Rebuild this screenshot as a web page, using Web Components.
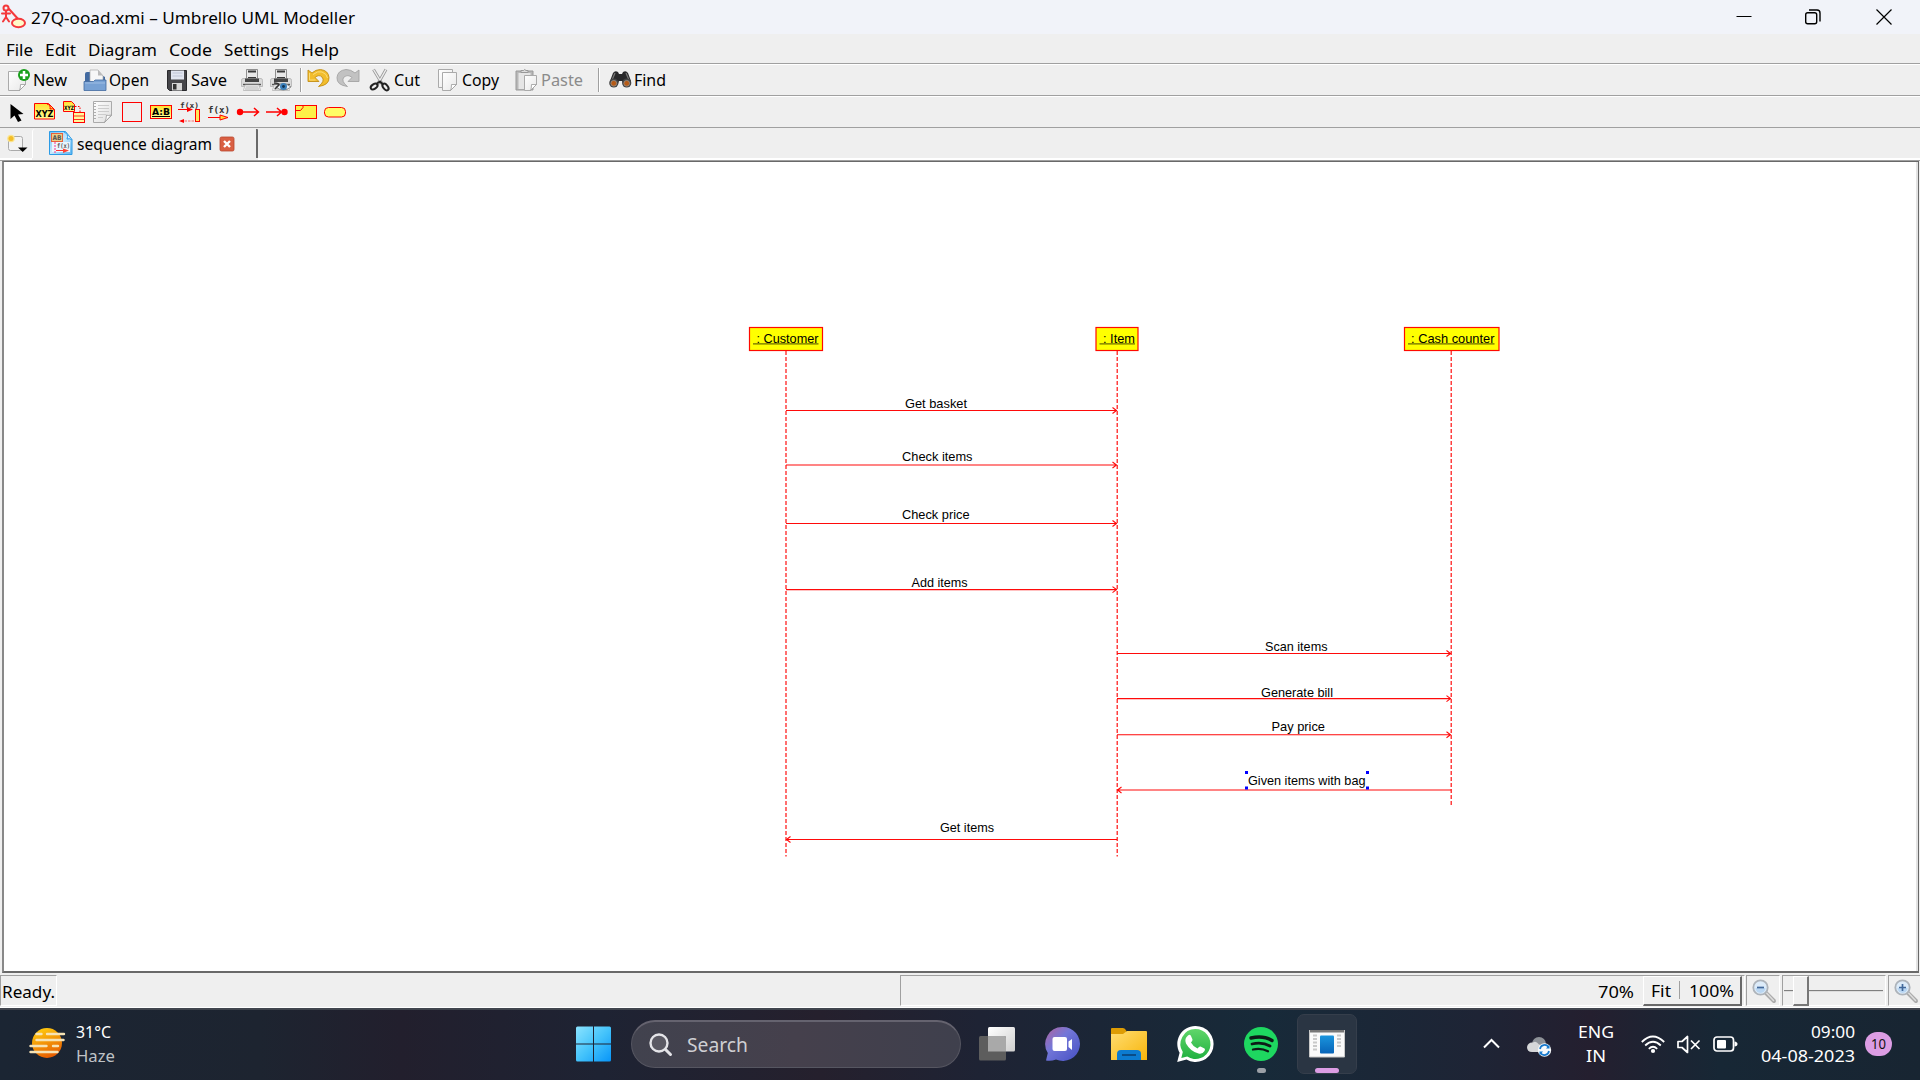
<!DOCTYPE html>
<html lang="en">
<head>
<meta charset="utf-8">
<title>27Q-ooad.xmi – Umbrello UML Modeller</title>
<style>
html,body{margin:0;padding:0;width:1920px;height:1080px;overflow:hidden;background:#efefef}
body{font-family:"Noto Sans","Open Sans",sans-serif;font-size:17px;color:#000}
</style>
</head>
<body>
<uml-desktop></uml-desktop>
<script>
function define(name, css, html, hook) {
  const tpl = document.createElement('template');
  tpl.innerHTML = '<style>:host{display:block;box-sizing:border-box}*{box-sizing:border-box}' + css + '</style>' + html;
  customElements.define(name, class extends HTMLElement {
    constructor() {
      super();
      this.attachShadow({ mode: 'open' }).appendChild(tpl.content.cloneNode(true));
    }
    connectedCallback() { if (hook) hook.call(this, this.shadowRoot); }
  });
}

/* Text condensed or expanded to a given advance width */
define('fit-text', ':host{display:inline-block;white-space:nowrap;flex:none;line-height:24px;height:24px}span{display:inline-block;transform-origin:0 50%}', '<span><slot></slot></span>', function (r) {
  const w = parseFloat(this.getAttribute('w'));
  this.style.width = w + 'px';
  const s = r.querySelector('span');
  const n = s.offsetWidth ? s.getBoundingClientRect().width : 0;
  if (n) s.style.transform = 'scaleX(' + (w / n) + ')';
});

const page = (x, y, w, h) => `<path d="M${x} ${y}h${w}v${h - 6}l-6 6h-${w - 6}z" fill="url(#pg)" stroke="#aaa"/><path d="M${x + w} ${y + h - 6}h-5q0 4-1 6z" fill="#fff" stroke="#999" stroke-width=".8"/>`;
const pg = '<linearGradient id="pg" x1="0" y1="0" x2="1" y2="1"><stop offset="0" stop-color="#fff"/><stop offset="1" stop-color="#e8e8e8"/></linearGradient>';
const yel = '<linearGradient id="yl" x1="0" y1="0" x2="0" y2="1"><stop offset="0" stop-color="#ffe030"/><stop offset="1" stop-color="#fffc96"/></linearGradient>';
const printer = '<path d="M6.500 1.500h11v9h-11z" fill="#e8e8e8" stroke="#777" stroke-width=".8"/><path d="M8 2.500h8v2H8zM8 9h8v2H8z" fill="#3a3a3a"/><path d="M3 10.500h18q1.500 0 1.500 2v6H1.500v-6q0-2 1.500-2z" fill="#dadada" stroke="#aaa" stroke-width=".7"/><path d="M5 10.500h14v3.500H5z" fill="#444"/><path d="M3 16.500h18" stroke="#555" stroke-width="1.400"/><path d="M5 17h14l1.500 5.500h-17z" fill="#fafafa" stroke="#aaa" stroke-width=".7"/><path d="M5.500 19h13M5 21h14" stroke="#999" stroke-width=".8"/>';
const glass = sign => `<path d="M15 14l8 8" stroke="#aaa" stroke-width="4" stroke-linecap="round"/><path d="M15.500 14l7 7.500" stroke="#ddd" stroke-width="1.500" stroke-linecap="round"/><circle cx="9.500" cy="8.500" r="7.200" fill="#dcebf9" stroke="#adb3ba" stroke-width="1.800"/><path d="M4.500 9a5 5 0 0 0 10 0z" fill="#b9d6f2"/><path d="${sign}" stroke="#42699b" stroke-width="1.700"/>`;
const icons = {
  umbrello: '<g fill="none" stroke="#f4393c" stroke-width="2" stroke-linecap="round"><circle cx="5" cy="4" r="2.500"/><path d="M5 7v6M1 9.500h8M5 13l-3 4.500M5 13l3 4.500M8 5l10 11"/><ellipse cx="17.500" cy="19" rx="6.500" ry="4.300" fill="#fffac8"/></g>',
  minimize: '<path d="M4.500 11.500h15" stroke="#000" stroke-width="1"/>',
  restore: '<g fill="none" stroke="#000" stroke-width="1.400"><rect x="4.700" y="7.700" width="11" height="11" rx="2"/><path d="M8 5h8q3 0 3 3v8.500"/></g>',
  close: '<path d="M4.500 4.500l15 15M19.500 4.500l-15 15" stroke="#000" stroke-width="1.200"/>',
  new: `${pg}${page(1.5, 3.5, 17, 19)}<circle cx="17" cy="7" r="6" fill="#1aa01c"/><path d="M17 3v8M13 7h8" stroke="#fff" stroke-width="2.500"/>`,
  open: '<path d="M2 22V6q0-2 2-2h9l9 5v13z" fill="#426aa0"/><path d="M7 14V2h8l5 6v7z" fill="#f7f7f7" stroke="#aaa" stroke-width=".7"/><path d="M15 2v5.500h5z" fill="#bbb"/><path d="M1 13.500h9.500l1.500-1.500h11v10.500H1z" fill="#77a1d4" stroke="#426aa0" stroke-width=".8"/><path d="M2 15h20" stroke="#a9c6e8" stroke-width=".8"/>',
  save: '<path d="M2.500 2.500h19v20H4.500l-2-2z" fill="#454549" stroke="#29292c"/><path d="M6 2.500h13v9H6z" fill="#e2e6f1"/><path d="M7.500 5h10M7.500 8h10" stroke="#bfc5d6"/><path d="M7 15h10v7.500H7z" fill="#d6d6d6"/><path d="M8 16h3.500v5.500H8z" fill="#333"/>',
  print: printer,
  preview: printer + '<path d="M7 19q6-7 15 0q-8 6-15 0z" fill="#eef4fa" stroke="#777" stroke-width=".8"/><circle cx="14.500" cy="18.500" r="3.500" fill="#3b80bb"/><circle cx="14.500" cy="18.500" r="1.400" fill="#143250"/><path d="M5 15q5 0 5 2l-4 4" stroke="#333" fill="none" stroke-width="1.500"/>',
  undo: '<path d="M2 2v11.500h11l-4-4q4-3.500 7-.5 3.500 4-3.500 9.500 11-1.500 10.500-9-.5-7-8.500-8-5 0-8.500 3.500z" fill="#f2bd2c" stroke="#c38d13" stroke-width=".9"/><path d="M3.500 5v7h6M7 6.500q5-4 9-2.500 5 2 5.500 6" fill="none" stroke="#fbdc78"/>',
  redo: '<g transform="matrix(-1 0 0 1 24 0)"><path d="M1 2v11.500h11l-4-4q4-3.500 8-.5 3.500 4-3.500 9.500 11-1.500 10.500-9-.5-7-9-8-5 0-9 3.500z" fill="#c2c2c2" stroke="#a4a4a4" stroke-width=".9"/></g>',
  cut: '<path d="M5.500 1.500l9 15M18 1.500l-8.500 15" stroke="#999" stroke-width="3"/><path d="M5.500 1.500l9 15M18 1.500l-8.500 15" stroke="#eee" stroke-width="1.400"/><g fill="none" stroke="#222" stroke-width="2"><ellipse cx="5.800" cy="18.500" rx="3.800" ry="2.300" transform="rotate(-35 6 18)"/><ellipse cx="17.500" cy="19" rx="3.800" ry="2.300" transform="rotate(50 17.500 19)"/></g><path d="M9 15.500l3-2 3 3" stroke="#222" stroke-width="2" fill="none"/>',
  copy: `${pg}${page(2.5, 1.5, 14, 18)}${page(6.5, 4.5, 14, 18)}`,
  paste: `${pg}<path d="M2 3h17v19H2z" fill="#b8b8b8" stroke="#999"/><path d="M4.500 5h12v16h-12z" fill="#e6e6e6"/><path d="M7 4.500V2.500h2.500q1-2 2.500 0H14v2z" fill="#ddd" stroke="#999"/>${page(10.5, 7.5, 12, 15)}`,
  find: '<path d="M5 5q2-3 5-1l1 2h3l1-2q3-2 5 1l3 8v3q-4 4-8 0l-1-3h-3l-1 3q-4 4-8 0v-3z" fill="#29292b"/><path d="M7 5l-3 7M18 5l3 7" stroke="#777" stroke-width="1.300"/><circle cx="5.800" cy="15" r="4.600" fill="#444"/><circle cx="5.800" cy="15.300" r="2.900" fill="#b65b17" stroke="#999" stroke-width=".7"/><circle cx="18.700" cy="15" r="4.600" fill="#444"/><circle cx="18.700" cy="15.300" r="2.900" fill="#b65b17" stroke="#999" stroke-width=".7"/>',
  arrow: '<path d="M6.500 4v15l4-3.500 3.500 6.500 3.500-1.500-3.500-6 5.500-.5z" fill="#000"/>',
  object: `${yel}<path d="M1.500 3.500h14l6 6v9.500h-20z" fill="url(#yl)" stroke="red"/><path d="M14 4q4 1 3 5 3-1 4.500 1" fill="#ffe030" stroke="red"/><text x="2.500" y="17" font-size="9" font-weight="bold" textLength="18" lengthAdjust="spacingAndGlyphs" font-family="DejaVu Sans">XYZ</text>`,
  object2: `${yel}<path d="M1.500 1.500h8l3 3v7h-11z" fill="url(#yl)" stroke="red"/><text x="2" y="10" font-size="6" font-weight="bold" textLength="10" lengthAdjust="spacingAndGlyphs" font-family="DejaVu Sans">XYZ</text><path d="M13 6.500h5v6" fill="none" stroke="red" stroke-dasharray="1.500 1.500"/><rect x="11.500" y="12.500" width="11" height="10" fill="#fff89a" stroke="red"/><path d="M12 16h10M12 19.500h10" stroke="red" stroke-width=".8"/>`,
  note: '<linearGradient id="pg" x1="0" y1="0" x2="1" y2="1"><stop offset="0" stop-color="#fff"/><stop offset="1" stop-color="#ddd"/></linearGradient><path d="M2.500 1.500h18v14l-7 7h-11z" fill="url(#pg)" stroke="#aaa"/><path d="M7 5.500h11M7 8.500h11M7 11.500h11M7 14.500h8M7 17.500h5" stroke="#ccc"/><path d="M4 3v18" stroke="#666" stroke-dasharray="1 2"/><path d="M20.500 15q-4 1-5 0 0 4-2 7.500z" fill="#fff" stroke="#999" stroke-width=".8"/>',
  box: '<rect x="2.500" y="2.500" width="19" height="19" fill="#efefef" stroke="red"/>',
  ab: `${yel}<rect x="1.500" y="5.500" width="21" height="13" fill="url(#yl)" stroke="red"/><text x="3" y="14.500" font-size="9" font-weight="bold" textLength="18" lengthAdjust="spacingAndGlyphs" font-family="DejaVu Sans">A:B</text><path d="M3 16.500h18" stroke="#000"/>`,
  sync: '<text x="2" y="7.500" font-size="7.500" textLength="19" lengthAdjust="spacingAndGlyphs" font-weight="bold" fill="#333" font-family="DejaVu Sans Mono">f(x)</text><path d="M0 9.500h14" stroke="red"/><path d="M9 7l6 2.500-6 2.500z" fill="red"/><rect x="17.500" y="9.500" width="4" height="12" fill="#ffe858" stroke="red"/><path d="M3 21h13" stroke="#f66" stroke-dasharray="2.500 1"/><path d="M1 21l5-2v4z" fill="red"/>',
  fx: '<text x="1" y="13" font-size="9.500" textLength="22" lengthAdjust="spacingAndGlyphs" font-weight="bold" fill="#333" font-family="DejaVu Sans Mono">f(x)</text><path d="M1 17.500h14" stroke="red"/><path d="M13 15l8 2.500-8 2.500z" fill="#ffdb30" stroke="red"/>',
  found: '<circle cx="4" cy="12" r="3.200" fill="red"/><path d="M4 12h18M18 8l4.500 4-4.500 4" stroke="red" stroke-width="1.500" fill="none"/>',
  lost: '<circle cx="19.500" cy="12" r="3.200" fill="red"/><path d="M1 12h18M12 8l4.500 4-4.500 4" stroke="red" stroke-width="1.500" fill="none"/>',
  frag: '<rect x="1.500" y="5.500" width="21" height="13" fill="#fdf048" stroke="red"/><path d="M1.500 10.500h5l2.500-3v-2" fill="none" stroke="red"/>',
  precond: '<rect x="1.500" y="7.500" width="21" height="9.500" rx="4" fill="#fffd66" stroke="red"/>',
  newtab: '<rect x="5.500" y="5.500" width="14" height="14" rx="2" fill="#f3f3f3" stroke="#aaa"/><circle cx="8" cy="7.500" r="3.800" fill="#fbe48d"/><circle cx="8" cy="7.500" r="2.500" fill="#f3bd29"/><path d="M15 16.500h9.500L19.700 21z" fill="#000"/>',
  seqtab: '<linearGradient id="b" x1="0" y1="0" x2="1" y2="1"><stop offset="0" stop-color="#6fc1f5"/><stop offset=".5" stop-color="#c6e8fc"/><stop offset="1" stop-color="#5bb4f0"/></linearGradient><path d="M.5.500h16l6.500 8v15H.5z" fill="url(#b)" stroke="#2b9be6"/><path d="M3 11h18v10H3z" fill="#e9f5fd"/><path d="M15 1q5 2 3 7 3-1 5 1" fill="#e6f5ff" stroke="#2b9be6"/><rect x="2.500" y="2.500" width="11" height="8" fill="#e9cf88" stroke="#e8603a"/><text x="3.500" y="9" font-size="6.500" font-weight="bold" textLength="9" lengthAdjust="spacingAndGlyphs" fill="#555" font-family="DejaVu Sans">AB</text><text x="8" y="17" font-size="6.500" font-weight="bold" textLength="13" lengthAdjust="spacingAndGlyphs" fill="#555" font-family="DejaVu Sans Mono">f(x)</text><path d="M6 11v11" stroke="#f38" stroke-dasharray="2 1"/><path d="M7 19.500h9" stroke="#f33"/><path d="M14 17.500l6 2-6 2.500z" fill="#f43"/>',
  tabclose: '<rect x="1" y="1" width="14" height="14" rx="1.500" fill="#d95f43" stroke="#b9482f" stroke-width=".8"/><path d="M5 5l6 6M11 5l-6 6" stroke="#fff" stroke-width="2.400"/>',
  zoomout: glass('M6 8.500h7'), zoomin: glass('M6 8.500h7M9.500 5v7'),
  haze: '<linearGradient id="h" x1=".3" y1="0" x2=".7" y2="1"><stop offset="0" stop-color="#ffcb0f"/><stop offset="1" stop-color="#e55700"/></linearGradient><circle cx="18" cy="18" r="15" fill="url(#h)"/><g stroke="#f6e3b5" stroke-width="2.400" stroke-linecap="round"><path d="M7.500 9h5M18 9h17M7.500 15h27M1.500 21h16M24 21h5M1.500 27h27"/></g>',
  windows: '<linearGradient id="w" gradientUnits="userSpaceOnUse" x1="0" y1="0" x2="36" y2="36"><stop offset="0" stop-color="#8ce4ff"/><stop offset=".5" stop-color="#44c3fb"/><stop offset="1" stop-color="#0593f8"/></linearGradient><path d="M0 2q0-1.500 1.500-1.500H17v17H0zM18 .500h15.500q1.500 0 1.500 1.500v15.500H18zM0 18.500h17v17H1.500Q0 35.500 0 34zM18 18.500h17V34q0 1.500-1.500 1.500H18z" fill="url(#w)"/>',
  search: '<circle cx="10" cy="10" r="8.500" fill="#5a5963" stroke="#e4e4e8" stroke-width="2.400"/><path d="M16.500 16.500l5 5" stroke="#e4e4e8" stroke-width="3" stroke-linecap="round"/>',
  taskview: '<linearGradient id="t" x1="0" y1="0" x2="1" y2="1"><stop offset="0" stop-color="#fff"/><stop offset="1" stop-color="#cfcfcf"/></linearGradient><rect x="9" y="1" width="27" height="24.500" rx="1.500" fill="url(#t)"/><rect y="10" width="27" height="24.500" rx="1.500" fill="#5d5d5d"/><path d="M9 10h16.500q1.500 0 1.500 1.500v14H9z" fill="#a9a9a9"/>',
  teams: '<linearGradient id="m" x1=".1" y1=".2" x2=".8" y2=".9"><stop offset="0" stop-color="#9a6bb3"/><stop offset=".35" stop-color="#7377d8"/><stop offset="1" stop-color="#5059c9"/></linearGradient><path d="M17.500 1a17 17 0 1 1-6.500 32.500Q6 35.500 1 34.500l1.800-7.500A17 17 0 0 1 17.500 1z" fill="url(#m)"/><rect x="7.500" y="11" width="14.500" height="14" rx="2" fill="#fff"/><path d="M23.500 15.500l3.500-2.500v11L23.500 21z" fill="#fff"/>',
  folder: '<linearGradient id="f" x1="0" y1="0" x2="1" y2="1"><stop offset="0" stop-color="#ffdd72"/><stop offset="1" stop-color="#f8b50a"/></linearGradient><path d="M0 3q0-1 1-1h11q2 0 3.500 3v4H0z" fill="#dd9c04"/><path d="M0 8h12l4-3h19q1 0 1 1v28H0z" fill="url(#f)"/><path d="M6 34V28q0-4 4-4h16q4 0 4 4v6z" fill="#0c7bd0"/><path d="M11 29h14" stroke="#0a4c87" stroke-width="2"/>',
  whatsapp: '<linearGradient id="a" x1="0" y1="0" x2="0" y2="1"><stop offset="0" stop-color="#60d66a"/><stop offset="1" stop-color="#21b141"/></linearGradient><path d="M18 0a18 18 0 1 1-8.500 33.500L.2 36l2.400-9.200A18 18 0 0 1 18 0z" fill="#fff"/><path d="M18.200 3a15 15 0 1 1-8 27.500L4.300 32l1.500-6A15 15 0 0 1 18.200 3z" fill="url(#a)"/><path d="M11 9.500q2-1.500 3 .5l1.500 3.500q.3 1-1.500 3 2 4 6.500 6 2-2.500 3-2l4 2q1 .5 0 2.500-2 3.500-6 2.500-8-2-12.500-10-2-5 2-8z" fill="#fff"/>',
  spotify: '<circle cx="18" cy="18" r="17" fill="#1ed760"/><g fill="none" stroke="#0d1a17" stroke-linecap="round"><path d="M8 12q12-3 21 2.500" stroke-width="3.400"/><path d="M9 18q10-2.500 18 2" stroke-width="2.800"/><path d="M10 23.500q8-2 15 1.800" stroke-width="2.300"/></g>',
  appwin: '<rect x="0" y="4" width="36" height="27" fill="#fafafa"/><path d="M0 4h36v2.500H0z" fill="#777"/><path d="M.5 4v27h35V4" fill="none" stroke="#c8c8c8"/><linearGradient id="p" x1="0" y1="0" x2="0" y2="1"><stop offset="0" stop-color="#1b95dd"/><stop offset="1" stop-color="#0864b8"/></linearGradient><rect x="11" y="9.500" width="14" height="18" rx="1" fill="url(#p)"/><path d="M4 9.500h4M4 13h4M4 16.500h4M4 20h4M4 23.500h4M28 9.500h4M28 13h4M28 16.500h4M28 20h4" stroke="#c9c9c9" stroke-width="2"/>',
  chevron: '<path d="M1 10.500L8.500 3 16 10.500" fill="none" stroke="#fff" stroke-width="2"/>',
  cloud: '<circle cx="12" cy="8" r="7" fill="#8e9298"/><path d="M19 16V8q5 1 3 8z" fill="#777b82"/><path d="M5 16q-5 0-5-5 1-5 6-4.500 3-2 6 2 5 0 5 7.500z" fill="#d6d7d9"/><circle cx="17.500" cy="14" r="6.700" fill="#f7fafc"/><path d="M13 13a4.700 4.700 0 0 1 8.500-2M22 15a4.700 4.700 0 0 1-8.500 2" fill="none" stroke="#1678cc" stroke-width="1.700"/><path d="M22.500 8.500v4H19zM12.500 19.500v-4H16z" fill="#1678cc"/>',
  wifi: '<g fill="none" stroke="#fff" stroke-width="1.800"><path d="M.8 8q11-11 22.400 0M4.200 11.500q7.800-7.500 15.600 0M7.800 14.800q4.200-4 8.400 0"/></g><circle cx="12" cy="17" r="2.100" fill="#fff"/>',
  mute: '<g fill="none" stroke="#fff" stroke-width="1.700" stroke-linejoin="round"><path d="M1 7.500h4l5.500-5v16L5 13.500H1zM14 6.500l8.500 8.500M22.500 6.500L14 15"/></g>',
  battery: '<rect x="1" y="3" width="19.500" height="14" rx="3" fill="none" stroke="#fff" stroke-width="1.700"/><rect x="4" y="6" width="9" height="8.500" rx="1" fill="#fff"/><path d="M21.500 7.500q3 .5 3 2.500t-3 2.500z" fill="#fff"/>'
};
define('ui-icon', ':host{display:inline-block;flex:none;width:24px;height:24px}svg{display:block;overflow:visible}', '<div></div>', function (r) {
  const w = this.getAttribute('w') || 24, h = this.getAttribute('h') || w;
  this.style.width = w + 'px'; this.style.height = h + 'px';
  r.querySelector('div').innerHTML = `<svg width="${w}" height="${h}" viewBox="0 0 ${w} ${h}">${icons[this.getAttribute('name')] || ''}</svg>`;
});

define('title-bar', ':host{height:34px;background:#f1f3f9;display:flex;align-items:center;padding-left:1px}fit-text{margin-top:2px}.c{display:flex;margin-left:auto;margin-top:-1px;gap:45px;padding-right:24px}.c :last-child{margin-left:2px}', `
  <ui-icon name="umbrello" style="margin:-2px 6px 0 0"></ui-icon><fit-text w="324">27Q-ooad.xmi – Umbrello UML Modeller</fit-text>
  <div class="c"><ui-icon name="minimize"></ui-icon><ui-icon name="restore"></ui-icon><ui-icon name="close"></ui-icon></div>`);

define('menu-bar', ':host{height:31px;display:flex;align-items:center;gap:12px;padding:2px 0 0 6px;border-bottom:1px solid #fff;box-shadow:inset 0 -1px #a0a0a0}', `
  <fit-text w="27">File</fit-text><fit-text w="31">Edit</fit-text><fit-text w="69">Diagram</fit-text><fit-text w="43">Code</fit-text><fit-text w="65">Settings</fit-text><fit-text w="38">Help</fit-text>`);

define('tool-button', ':host{display:flex;align-items:center;gap:2px;flex:none}:host([disabled]){color:#8b8b8b;gap:3px}', '<ui-icon></ui-icon><slot></slot>', function (r) {
  const i = r.querySelector('ui-icon'); i.setAttribute('name', this.getAttribute('icon')); i.connectedCallback();
  this.style.width = this.getAttribute('w') + 'px';
});
define('tool-sep', ':host{width:1px;height:24px;background:#a0a0a0;box-shadow:1px 0 #fff;flex:none}', '');

define('main-toolbar', ':host{height:32px;display:flex;align-items:center;padding:0 0 2px 7px;font-size:16px;border-bottom:1px solid #fff;box-shadow:inset 0 -1px #a0a0a0}', `
  <tool-button icon="new" w="76"><fit-text w="34">New</fit-text></tool-button>
  <tool-button icon="open" w="82"><fit-text w="40">Open</fit-text></tool-button>
  <tool-button icon="save" w="75"><fit-text w="36">Save</fit-text></tool-button>
  <tool-button icon="print" w="29"></tool-button><tool-button icon="preview" w="31"></tool-button>
  <tool-sep style="margin-right:5px"></tool-sep>
  <tool-button icon="undo" w="30"></tool-button><tool-button icon="redo" w="32"></tool-button>
  <tool-button icon="cut" w="68"><fit-text w="26">Cut</fit-text></tool-button>
  <tool-button icon="copy" w="78"><fit-text w="37">Copy</fit-text></tool-button>
  <tool-button icon="paste" w="84" disabled><fit-text w="42">Paste</fit-text></tool-button>
  <tool-sep style="margin-right:9px"></tool-sep>
  <tool-button icon="find" w="70"><fit-text w="32">Find</fit-text></tool-button>`);

define('diagram-toolbar', ':host{height:31px;display:flex;align-items:center;gap:5px;padding:0 0 1px 4px;border-bottom:1px solid #a0a0a0}', 
  ['arrow', 'object', 'object2', 'note', 'box', 'ab', 'sync', 'fx', 'found', 'lost', 'frag', 'precond'].map(n => `<ui-icon name="${n}"></ui-icon>`).join(''));

define('tab-bar', ':host{height:33px;display:flex;align-items:stretch;border-bottom:1px solid #a0a0a0}.n{width:32px;padding:3px 0 0 3px;border-bottom:2px solid #fff}.t{width:226px;margin-top:1px;border-left:1px solid #fff;border-right:2px solid #696969;border-radius:3px 1px 0 0;display:flex;align-items:center;padding-left:16px;margin-bottom:2px}.r{flex:1;border-bottom:2px solid #fff}', `
  <div class="n"><ui-icon name="newtab"></ui-icon></div>
  <div class="t"><ui-icon name="seqtab" style="margin:0 4px 2px 0"></ui-icon><fit-text w="135">sequence diagram</fit-text><ui-icon name="tabclose" w="16" style="margin-left:7px"></ui-icon></div><div class="r"></div>`);

/* Sequence diagram on the scene canvas */
const lifelines = [
  { t: ': Customer', x: 749.5, w: 73, tx: 756.5, tw: 62, ux: 753, lx: 786, y2: 856.5 },
  { t: ': Item', x: 1096, w: 42, tx: 1103, tw: 32, ux: 1099.500, lx: 1117.200, y2: 856.5 },
  { t: ': Cash counter', x: 1404.500, w: 94.500, tx: 1411, tw: 83.5, ux: 1408, lx: 1451.200, y2: 807 }];
const messages = [
  ['Get basket', 786, 1117, 410.5, 905, 62, 408], ['Check items', 786, 1117, 465, 902, 70.5, 461],
  ['Check price', 786, 1117, 523.500, 902, 67.500, 519], ['Add items', 786, 1117, 589.600, 911.500, 56, 587],
  ['Scan items', 1117, 1451, 653.500, 1265, 62.500, 651], ['Generate bill', 1117, 1451, 698.600, 1261, 72, 697],
  ['Pay price', 1117, 1451, 734.800, 1271.500, 53.500, 731], ['Given items with bag', 1451, 1117, 790, 1248, 117.5, 785],
  ['Get items', 1117, 786, 839.500, 940, 54, 832]];
const X = 4, Y = 162;
let scene = '';
for (const l of lifelines) scene += `<line x1="${l.lx - X}" x2="${l.lx - X}" y1="${351 - Y}" y2="${l.y2 - Y}" stroke="#ff1010" stroke-width="1.200" stroke-dasharray="4 2"/><rect x="${l.x - X}" y="${327.5 - Y}" width="${l.w}" height="23" fill="#ff0" stroke="#ff0a00" stroke-width="1.200"/><text x="${l.tx - X}" y="${343 - Y}" textLength="${l.tw}" lengthAdjust="spacingAndGlyphs">${l.t}</text><path d="M${l.ux - X} ${343.9 - Y}H${l.tx + l.tw - X}" stroke="#6d6d00" stroke-width="1.200"/>`;
for (const [t, a, b, y, tx, tw, ty] of messages) {
  const d = b > a ? -1 : 1, ex = b - X + (d < 0 ? -.5 : .5), ey = y - Y;
  scene += `<path d="M${a - X} ${ey}H${b - X}M${ex + d * 4} ${ey - 3}L${ex} ${ey}L${ex + d * 4} ${ey + 3}" fill="none" stroke="#ff0a0a" stroke-width="1.100"/><text x="${tx - X}" y="${ty - Y}" textLength="${tw}" lengthAdjust="spacingAndGlyphs">${t}</text>`;
}
for (const [x, y] of [[1245, 771], [1366, 771], [1245, 786.5], [1366, 786.500]]) scene += `<rect x="${x - X}" y="${y - Y}" width="3" height="3" fill="#00f"/>`;
define('sequence-canvas', ':host{flex:1;min-height:0;margin:0 1px 0 2px;border:solid;border-width:1px 1px 2px 2px;border-color:#696969 #696969 #696969 #888;background:#fff;box-shadow:inset -3px -1px 0 -1px #e3e3e3}svg{display:block}text{font:13px "Liberation Sans",sans-serif;fill:#000}',
  `<svg width="1913" height="805" viewBox="0 0 1913 805">${scene}</svg>`);

define('status-bar', `:host{height:35px;display:flex;align-items:stretch;padding:2px 0 1px;border-bottom:1px solid #fff}
  fit-text{margin-top:2px}
  .s{border:1px solid;border-color:#a0a0a0 #fff #fff #a0a0a0;display:flex;align-items:center;flex:none}
  .b{height:30px;width:99px;border:solid;border-width:1px 2px 2px 1px;border-color:#fff #696969 #696969 #fff;display:flex;align-items:center;padding-left:7px;margin-left:9px}
  .b i{width:1px;height:18px;background:#a0a0a0;margin:0 9px 0 8px}
  .g{flex:1;height:2px;background:#808080;border-bottom:1px solid #ddd}
  .h{width:16px;height:30px;border:solid;border-width:1px 2px 2px 1px;border-color:#fff #777 #777 #fff;background:#efefef}`, `
  <div class="s" style="width:57px;padding-left:1px"><fit-text w="53">Ready.</fit-text></div>
  <div class="s" style="width:845px;margin-left:843px;padding-right:2px;justify-content:flex-end"><fit-text w="36">70%</fit-text><div class="b"><fit-text w="20">Fit</fit-text><i></i><fit-text w="45">100%</fit-text></div></div>
  <div class="s" style="width:34px;margin-left:1px;padding-left:4px"><ui-icon name="zoomout"></ui-icon></div>
  <div class="s" style="width:104px;margin-left:2px;padding:0 2px 0 1px"><div class="g" style="flex:0 0 9px"></div><div class="h"></div><div class="g"></div></div>
  <div class="s" style="width:34px;margin-left:2px;padding-left:4px"><ui-icon name="zoomin"></ui-icon></div>`);

define('task-bar', `:host{height:72px;padding-bottom:2px;border-top:2px solid #41454e;background:linear-gradient(90deg,#1b2533 0,#1d2430 260px,#221f2d 400px,#1e2333 600px,#25202d 820px,#1e2334 980px,#172a39 1260px,#1e2435 1480px,#241f2f 1590px,#172735 1720px,#182532 1920px);color:#fff;font-size:16px;display:flex;align-items:center}
  .st{display:flex;flex-direction:column;flex:none}.st.e{align-items:flex-end}.st.m{align-items:center}
  .q{width:330px;height:48px;margin-left:20px;border-radius:24px;background:linear-gradient(90deg,#41424e,#45404c 50%,#3f404d);border:1px solid #565661;border-top:2px solid #65636f;display:flex;align-items:center;padding-left:17px;color:#cfcfd3;font-size:19px;flex:none}
  .a{position:relative;width:60px;height:60px;border-radius:7px;display:flex;align-items:center;justify-content:center;margin-right:6px;flex:none}
  .a.on{background:#2a3543;border:1px solid #353e4b}
  .a b{position:absolute;bottom:1px;height:5px;border-radius:3px}
  .n{width:27px;height:24px;border-radius:12px;background:#dc9de4;color:#111;font-size:14px;display:flex;align-items:center;justify-content:center;margin-left:10px}`, `
  <ui-icon name="haze" w="36" style="margin:-2px 11px 0 29px"></ui-icon>
  <div class="st"><fit-text w="35">31°C</fit-text><fit-text w="39" style="color:#bfc2c6">Haze</fit-text></div>
  <ui-icon name="windows" w="36" style="margin-left:461px"></ui-icon>
  <div class="q" style="margin-left:19px"><ui-icon name="search" w="24" style="margin-right:14px"></ui-icon><fit-text w="61">Search</fit-text></div>
  <div style="display:flex;margin-left:6px"><div class="a"><ui-icon name="taskview" w="36"></ui-icon></div><div class="a"><ui-icon name="teams" w="36"></ui-icon></div><div class="a"><ui-icon name="folder" w="36"></ui-icon></div><div class="a"><ui-icon name="whatsapp" w="36"></ui-icon></div><div class="a"><ui-icon name="spotify" w="36"></ui-icon><b style="width:9px;background:#9ba0a7"></b></div><div class="a on"><ui-icon name="appwin" w="36"></ui-icon><b style="width:24px;background:#dc9de4;bottom:0"></b></div></div>
  <ui-icon name="chevron" w="17" h="14" style="margin-left:120px"></ui-icon>
  <ui-icon name="cloud" w="24" h="20" style="margin-left:27px;margin-top:4px"></ui-icon>
  <div class="st m" style="margin-left:27px"><fit-text w="36">ENG</fit-text><fit-text w="20">IN</fit-text></div>
  <ui-icon name="wifi" w="24" h="20" style="margin-left:27px"></ui-icon>
  <ui-icon name="mute" w="24" h="20" style="margin-left:12px"></ui-icon>
  <ui-icon name="battery" w="25" h="20" style="margin-left:12px"></ui-icon>
  <div class="st e" style="margin-left:23px"><fit-text w="44">09:00</fit-text><fit-text w="94">04-08-2023</fit-text></div>
  <div class="n"><fit-text w="15">10</fit-text></div>`);

define('uml-desktop', ':host{width:1920px;height:1080px;display:flex;flex-direction:column;background:#efefef}:host>*{flex-shrink:0}', `
  <title-bar></title-bar><menu-bar></menu-bar><main-toolbar></main-toolbar><diagram-toolbar></diagram-toolbar><tab-bar></tab-bar>
  <sequence-canvas style="flex:1 1 0"></sequence-canvas><status-bar></status-bar><task-bar></task-bar>`);
</script>
</body>
</html>
